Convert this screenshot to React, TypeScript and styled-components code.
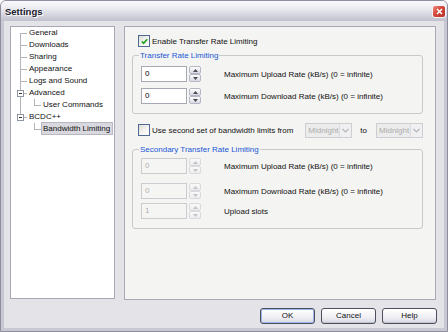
import React from 'react';
import styled, { createGlobalStyle } from 'styled-components';

const GlobalStyle = createGlobalStyle`
  html, body {
    margin: 0;
    padding: 0;
    background: #ffffff;
  }
  body {
    font-family: 'Liberation Sans', Arial, sans-serif;
    font-size: 8px;
    color: #111111;
  }
  * {
    box-sizing: border-box;
  }
`;

const Window = styled.div`
  width: 448px;
  height: 332px;
  display: flex;
  flex-direction: column;
  border: 1px solid #8e8e9e;
  border-radius: 6px 6px 0 0;
  background: #c8c8d4;
  overflow: hidden;
`;

const TitleBar = styled.div`
  height: 20px;
  flex: none;
  display: flex;
  align-items: center;
  justify-content: space-between;
  padding: 0 1px 0 4px;
  background: linear-gradient(#fbfbfd 0%, #e6e6ee 45%, #d2d2dd 75%, #c0c0ce 100%);
`;

const Title = styled.span`
  font-size: 9.5px;
  font-weight: bold;
  color: #20202c;
  text-shadow: 1px 1px 0 #ffffff;
`;

const CloseButton = styled.div`
  width: 14px;
  height: 13px;
  border: 1px solid #f4f4f8;
  border-radius: 3px;
  background: linear-gradient(135deg, #ec8c7c 0%, #d4483a 45%, #b8302a 100%);
  display: flex;
  align-items: center;
  justify-content: center;
`;

const Body = styled.div`
  flex: 1;
  display: flex;
  flex-direction: column;
  margin: 0 3px 3px 3px;
  padding: 5px 8px 0 6px;
  background: #e3e3e8;
`;

const Main = styled.div`
  display: flex;
  gap: 9px;
  height: 274px;
`;

const Tree = styled.div`
  width: 105px;
  height: 273px;
  flex: none;
  background: #ffffff;
  border: 1px solid #a7a7b7;
`;

const TreeRow = styled.div<{ $level: number }>`
  position: relative;
  height: 12px;
  line-height: 12px;
  padding-left: ${(p) => 18 + p.$level * 14}px;
  white-space: nowrap;
`;

const LineSeg = styled.span<{ $x: number; $span: 'full' | 'upper' | 'lower' }>`
  position: absolute;
  left: ${(p) => p.$x}px;
  top: ${(p) => (p.$span === 'lower' ? 6 : 0)}px;
  height: ${(p) => (p.$span === 'full' ? 12 : 6)}px;
  border-left: 1px solid #b4b4bc;
`;

const Stub = styled.span<{ $x: number }>`
  position: absolute;
  left: ${(p) => p.$x}px;
  top: 6px;
  width: 7px;
  border-top: 1px solid #b4b4bc;
`;

const Expander = styled.span<{ $x: number }>`
  position: absolute;
  left: ${(p) => p.$x - 3}px;
  top: 3px;
  width: 7px;
  height: 7px;
  border: 1px solid #8e96a4;
  background: #ffffff;
  z-index: 1;

  &::after {
    content: '';
    position: absolute;
    left: 1px;
    top: 2px;
    width: 3px;
    border-top: 1px solid #303030;
  }
`;

const NodeLabel = styled.span<{ $selected?: boolean }>`
  display: inline-block;
  height: 11px;
  line-height: 11px;
  padding: 0 2px 0 1px;
  margin-left: -1px;
  background: ${(p) => (p.$selected ? '#d8d8de' : 'transparent')};
  outline: ${(p) => (p.$selected ? '1px solid #b8b8c4' : 'none')};
`;

const Panel = styled.div`
  flex: 1;
  height: 274px;
  background: #f4f4f2;
  border: 1px solid #a9a9b6;
  padding: 6px 12px 0 7px;
  display: flex;
  flex-direction: column;
`;

const CheckRow = styled.div<{ $top?: number }>`
  display: flex;
  align-items: center;
  gap: 2px;
  height: 16px;
  margin-left: 6px;
  margin-top: ${(p) => p.$top || 0}px;
  white-space: nowrap;
`;

const CheckBox = styled.span`
  width: 12px;
  height: 12px;
  flex: none;
  border: 1px solid #4f6a94;
  background: linear-gradient(135deg, #dcdcd6 0%, #f6f6f4 60%, #ffffff 100%);
  display: flex;
  align-items: center;
  justify-content: center;
`;

const CheckLabel = styled.span`
  flex: 1;
`;

const Group = styled.div<{ $top: number; $pad: string }>`
  position: relative;
  margin-top: ${(p) => p.$top}px;
  padding: ${(p) => p.$pad};
  border: 1px solid #c9c9cd;
  border-radius: 3px;
`;

const Legend = styled.span`
  position: absolute;
  top: -6px;
  left: 6px;
  padding: 0 1px;
  line-height: 11px;
  background: #f4f4f2;
  color: #1a56d6;
`;

const FieldRow = styled.div<{ $top?: number }>`
  display: grid;
  grid-template-columns: 83px 1fr;
  align-items: center;
  height: 16px;
  margin-top: ${(p) => p.$top || 0}px;
  white-space: nowrap;
`;

const UpDown = styled.div`
  display: flex;
  gap: 2px;
`;

const TextBox = styled.div<{ $disabled?: boolean }>`
  width: 46px;
  height: 16px;
  line-height: 14px;
  padding-left: 3px;
  border: 1px solid ${(p) => (p.$disabled ? '#cbcbd1' : '#a5a9b5')};
  background: ${(p) => (p.$disabled ? '#f5f5f3' : '#ffffff')};
  color: ${(p) => (p.$disabled ? '#b0b0b0' : '#000000')};
`;

const Spin = styled.div`
  display: flex;
  flex-direction: column;
  width: 12px;
  height: 16px;
`;

const SpinButton = styled.div<{ $disabled?: boolean }>`
  flex: 1;
  display: flex;
  align-items: center;
  justify-content: center;
  border: 1px solid ${(p) => (p.$disabled ? '#dadade' : '#b6b6c4')};
  border-radius: 2px;
  background: ${(p) =>
    p.$disabled
      ? 'linear-gradient(#fafafa, #ececee)'
      : 'linear-gradient(#ffffff, #d9d9e3)'};
`;

const Combo = styled.div`
  width: 47px;
  height: 15px;
  display: flex;
  align-items: center;
  border: 1px solid #cdcdd2;
  background: #ececec;
  color: #ababab;
`;

const ComboText = styled.span`
  flex: 1;
  padding-left: 2px;
  overflow: hidden;
`;

const ComboArrow = styled.span`
  width: 12px;
  height: 13px;
  display: flex;
  align-items: center;
  justify-content: center;
  border-left: 1px solid #dcdce0;
  background: #f0f0f2;
`;

const ToLabel = styled.span`
  margin: 0 7px 0 6px;
`;

const ButtonRow = styled.div`
  display: flex;
  justify-content: flex-end;
  gap: 6px;
  margin-top: 8px;
  margin-right: -1px;
`;

const Button = styled.div<{ $default?: boolean }>`
  width: 55px;
  height: 16px;
  line-height: 14px;
  text-align: center;
  border: 1px solid #4c4f5c;
  border-radius: 3px;
  background: linear-gradient(#ffffff 0%, #f1f1f5 55%, #d8d8e2 100%);
  box-shadow: ${(p) =>
    p.$default ? 'inset 0 0 0 1px #9bb5ea' : 'inset 0 -1px 0 #c4c4d0'};
`;

type Seg = [number, 'full' | 'upper' | 'lower'];

interface TreeNode {
  label: string;
  level: number;
  segs: Seg[];
  stub?: number;
  expander?: number;
  selected?: boolean;
}

const nodes: TreeNode[] = [
  { label: 'General', level: 0, segs: [[9, 'lower']], stub: 9 },
  { label: 'Downloads', level: 0, segs: [[9, 'full']], stub: 9 },
  { label: 'Sharing', level: 0, segs: [[9, 'full']], stub: 9 },
  { label: 'Appearance', level: 0, segs: [[9, 'full']], stub: 9 },
  { label: 'Logs and Sound', level: 0, segs: [[9, 'full']], stub: 9 },
  { label: 'Advanced', level: 0, segs: [[9, 'full']], stub: 9, expander: 9 },
  { label: 'User Commands', level: 1, segs: [[9, 'full'], [23, 'upper']], stub: 23 },
  { label: 'BCDC++', level: 0, segs: [[9, 'upper']], stub: 9, expander: 9 },
  { label: 'Bandwidth Limiting', level: 1, segs: [[23, 'upper']], stub: 23, selected: true },
];

const Arrow = ({ up, color }: { up?: boolean; color: string }) => (
  <svg width="5" height="3" viewBox="0 0 5 3">
    <polygon points={up ? '0,3 2.5,0 5,3' : '0,0 5,0 2.5,3'} fill={color} />
  </svg>
);

const Chevron = () => (
  <svg width="7" height="5" viewBox="0 0 7 5">
    <polyline points="0.5,1 3.5,4 6.5,1" fill="none" stroke="#b4b4bc" strokeWidth="1.2" />
  </svg>
);

const SpinField = ({ value, disabled }: { value: string; disabled?: boolean }) => (
  <UpDown>
    <TextBox $disabled={disabled}>{value}</TextBox>
    <Spin>
      <SpinButton $disabled={disabled}>
        <Arrow up color={disabled ? '#c4c4c8' : '#4a4a56'} />
      </SpinButton>
      <SpinButton $disabled={disabled}>
        <Arrow color={disabled ? '#c4c4c8' : '#4a4a56'} />
      </SpinButton>
    </Spin>
  </UpDown>
);

const ComboBox = ({ value }: { value: string }) => (
  <Combo>
    <ComboText>{value}</ComboText>
    <ComboArrow>
      <Chevron />
    </ComboArrow>
  </Combo>
);

export default function App() {
  return (
    <>
      <GlobalStyle />
      <Window>
        <TitleBar>
          <Title>Settings</Title>
          <CloseButton>
            <svg width="7" height="7" viewBox="0 0 7 7">
              <path d="M1 1 L6 6 M6 1 L1 6" stroke="#ffffff" strokeWidth="1.6" />
            </svg>
          </CloseButton>
        </TitleBar>
        <Body>
          <Main>
            <Tree>
              {nodes.map((n) => (
                <TreeRow key={n.label} $level={n.level}>
                  {n.segs.map(([x, span]) => (
                    <LineSeg key={x} $x={x} $span={span} />
                  ))}
                  {n.stub !== undefined && <Stub $x={n.stub} />}
                  {n.expander !== undefined && <Expander $x={n.expander} />}
                  <NodeLabel $selected={n.selected}>{n.label}</NodeLabel>
                </TreeRow>
              ))}
            </Tree>
            <Panel>
              <CheckRow>
                <CheckBox>
                  <svg width="7" height="7" viewBox="0 0 7 7">
                    <path d="M0.8 3.4 L2.6 5.4 L6.3 1.2" fill="none" stroke="#21a221" strokeWidth="1.6" />
                  </svg>
                </CheckBox>
                <CheckLabel>Enable Transfer Rate Limiting</CheckLabel>
              </CheckRow>
              <Group $top={6} $pad="10px 8px 9px 8px">
                <Legend>Transfer Rate Limiting</Legend>
                <FieldRow>
                  <SpinField value="0" />
                  <span>Maximum Upload Rate (kB/s) (0 = infinite)</span>
                </FieldRow>
                <FieldRow $top={6}>
                  <SpinField value="0" />
                  <span>Maximum Download Rate (kB/s) (0 = infinite)</span>
                </FieldRow>
              </Group>
              <CheckRow $top={8}>
                <CheckBox />
                <CheckLabel>Use second set of bandwidth limits from</CheckLabel>
                <ComboBox value="Midnight" />
                <ToLabel>to</ToLabel>
                <ComboBox value="Midnight" />
              </CheckRow>
              <Group $top={11} $pad="8px 8px 9px 8px">
                <Legend>Secondary Transfer Rate Limiting</Legend>
                <FieldRow>
                  <SpinField value="0" disabled />
                  <span>Maximum Upload Rate (kB/s) (0 = infinite)</span>
                </FieldRow>
                <FieldRow $top={9}>
                  <SpinField value="0" disabled />
                  <span>Maximum Download Rate (kB/s) (0 = infinite)</span>
                </FieldRow>
                <FieldRow $top={4}>
                  <SpinField value="1" disabled />
                  <span>Upload slots</span>
                </FieldRow>
              </Group>
            </Panel>
          </Main>
          <ButtonRow>
            <Button $default>OK</Button>
            <Button>Cancel</Button>
            <Button>Help</Button>
          </ButtonRow>
        </Body>
      </Window>
    </>
  );
}
